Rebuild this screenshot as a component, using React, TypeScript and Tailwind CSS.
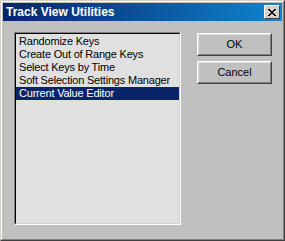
import React from "react";

const items = [
  "Randomize Keys",
  "Create Out of Range Keys",
  "Select Keys by Time",
  "Soft Selection Settings Manager",
  "Current Value Editor",
];

function Btn({ label }: { label: string }) {
  return (
    <div className="w-[75px] h-[23px] border border-t-white border-l-white border-b-[#404040] border-r-[#404040]">
      <div className="w-full h-full border border-t-[#e0e0e0] border-l-[#e0e0e0] border-b-[#808080] border-r-[#808080] flex items-center justify-center text-[11px] text-black">
        {label}
      </div>
    </div>
  );
}

export default function App() {
  return (
    <div
      className="w-[285px] h-[241px] bg-[#c0c0c0] border border-t-[#d4d0c8] border-l-[#d4d0c8] border-b-[#404040] border-r-[#404040]"
      style={{ fontFamily: '"Liberation Sans", Arial, sans-serif' }}
    >
      <div className="w-full h-full border border-t-white border-l-white border-b-[#808080] border-r-[#808080] p-[1px] flex flex-col">
        <div className="h-[18px] flex items-center justify-between pl-[3px] pr-[2px] bg-gradient-to-r from-[#0a246a] to-[#1084d0]">
          <span className="text-white font-bold text-[12px] leading-none">Track View Utilities</span>
          <div className="w-[16px] h-[14px] bg-[#d4d0c8] border border-t-white border-l-white border-b-[#404040] border-r-[#404040] flex items-center justify-center">
            <svg width="8" height="7" viewBox="0 0 8 7" shapeRendering="crispEdges">
              <path d="M0 0h2v1h-2zM6 0h2v1h-2zM1 1h2v1h-2zM5 1h2v1h-2zM2 2h4v1h-4zM3 3h2v1h-2zM2 4h4v1h-4zM1 5h2v1h-2zM5 5h2v1h-2zM0 6h2v1h-2zM6 6h2v1h-2z" fill="#000" />
            </svg>
          </div>
        </div>
        <div className="flex pl-[11px] pt-[11px] gap-[16px]">
          <div className="w-[167px] h-[193px] border border-t-[#808080] border-l-[#808080] border-b-white border-r-white">
            <div className="w-full h-full bg-[#e0e0e0] border border-t-black border-l-black border-b-[#d4d0c8] border-r-[#d4d0c8] pt-[1px]">
              {items.map((it, i) => (
                <div
                  key={it}
                  className={
                    i === 4
                      ? "h-[13px] leading-[13px] text-[11px] tracking-[-0.2px] pl-[3px] bg-[#0a246a] text-white whitespace-nowrap"
                      : "h-[13px] leading-[13px] text-[11px] tracking-[-0.2px] pl-[3px] text-black whitespace-nowrap"
                  }
                >
                  {it}
                </div>
              ))}
            </div>
          </div>
          <div className="flex flex-col gap-[5px] mt-[1px]">
            <Btn label="OK" />
            <Btn label="Cancel" />
          </div>
        </div>
      </div>
    </div>
  );
}
